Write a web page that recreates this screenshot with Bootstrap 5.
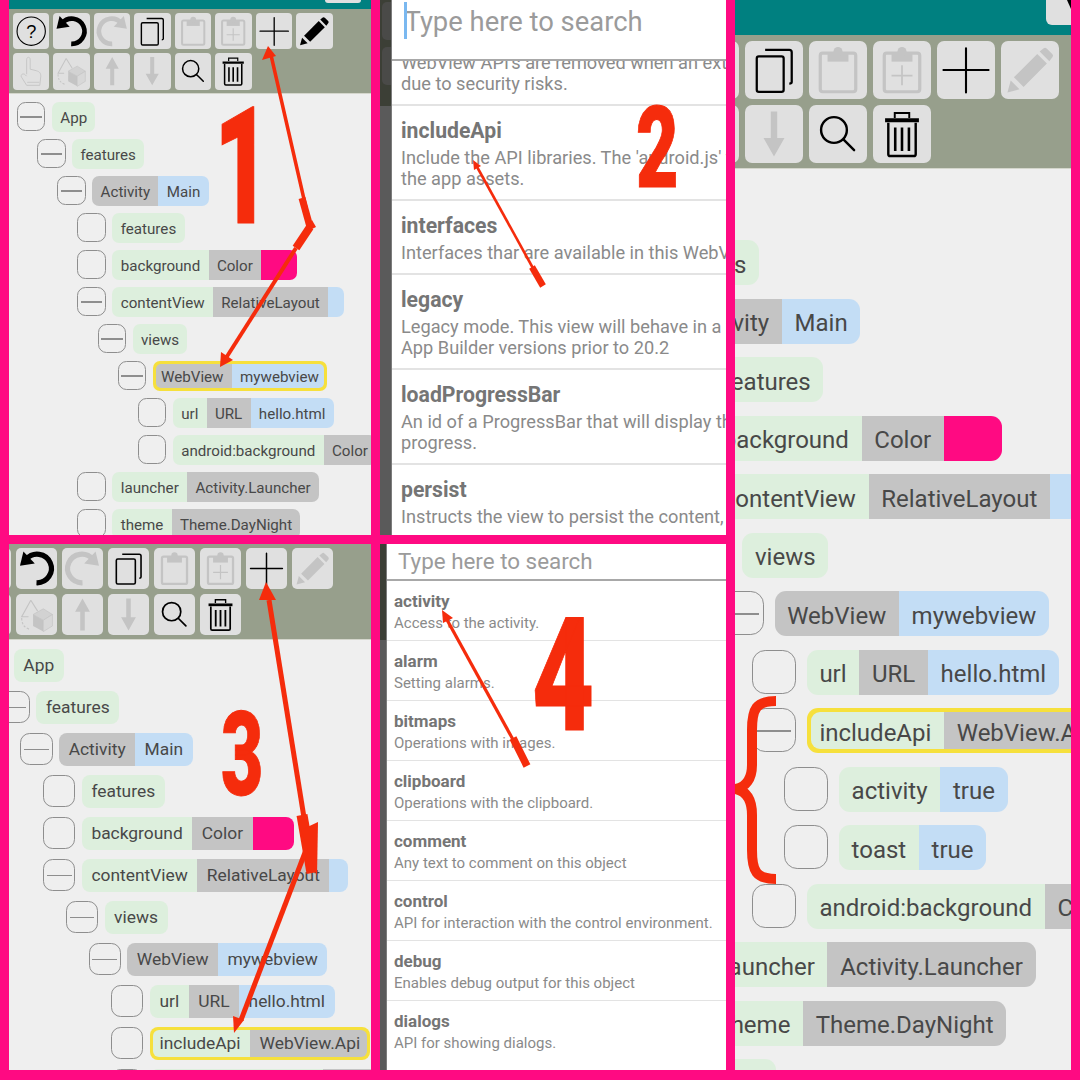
<!doctype html>
<html lang="en">
<head>
<meta charset="utf-8">
<title>App Builder WebView tutorial</title>
<link href="https://cdn.jsdelivr.net/npm/bootstrap@5.3.0/dist/css/bootstrap.min.css" rel="stylesheet">
<style>
html,body{margin:0;background:#ff0a82;}
body{width:1080px;height:1080px;overflow:hidden;position:relative;font-family:Roboto,"Liberation Sans",sans-serif;}
.collage{width:1080px;height:1080px;}
.colA{width:362px;margin-left:9px;flex:none;}
.colB{width:346px;margin-left:9px;flex:none;}
.colC{width:336px;margin-left:9px;flex:none;height:1070px;}
.shotTop{height:535px;flex:none;overflow:hidden;}
.shotBot{height:526px;flex:none;overflow:hidden;margin-top:9px;}
.screen{background:#efefef;}
/* toolbar */
.teal{background:#008080;flex:none;}
.teal1{height:9px;padding-right:10px;}
.teal1 .frag{width:36px;height:3px;border-radius:0 0 3px 3px;background:#e0e0e0;}
.teal5{height:35px;}
.teal5 .frag{width:25px;height:25px;border-radius:0 0 0 6px;background:#e0e0e0;color:#000;}
.teal5 .frag svg{display:block;width:25px;height:25px;}
.bar{background:#979f8c;border-bottom:1px solid #d4d6cc;flex:none;}
.tb{display:flex;align-items:center;justify-content:center;flex:none;padding:0;border:0;background:#e0e0e0;color:#000;width:var(--b);height:var(--b);border-radius:var(--r);}
.tb.off{color:#c4c4c4;}
.tb:hover,.tb:focus{background:#e0e0e0;color:#000;}
.tb svg{width:100%;height:100%;display:block;}
.bar1{--b:36.4px;--r:4px;padding:4px 0 3.4px 4px;}
.bar1 .tbrow{gap:4.1px;}
.bar1 .tbrow+.tbrow{margin-top:4px;}
.bar3{--b:41px;--r:5px;padding:4px 0 4px 0;margin-left:-39px;}
.bar3 .tbrow{gap:5px;}
.bar3 .tbrow+.tbrow{margin-top:5px;}
.bar5{--b:58px;--r:7px;padding:6px 0 5px 0;margin-left:-182px;width:calc(100% + 182px);}
.bar5 .tbrow{gap:6px;}
.bar5 .tbrow+.tbrow{margin-top:6px;}
/* tree */
.tree{color:#484848;white-space:nowrap;}
.tree1{--box:28.4px;--gap:6.6px;--ind:20.15px;--step:37px;--fs:15.15px;--pad:8.3px;--rad:7px;--blank:16px;--sw:36px;--bd:1.2px;--ring:3px;--dy:2.500px;margin-left:8px;padding-top:8px;}
.tree3{--box:32.2px;--gap:6.6px;--ind:22.7px;--step:42px;--fs:17.4px;--pad:9.5px;--rad:8px;--blank:18.5px;--sw:41px;--bd:1.3px;--ring:3px;--dy:0px;margin-left:-34px;padding-top:9px;}
.tree5{--box:44px;--gap:10.5px;--ind:32.2px;--step:58.5px;--fs:24px;--pad:12.7px;--rad:11px;--blank:30px;--sw:58px;--bd:1.6px;--ring:4px;--dy:4px;margin-left:-176px;padding-top:12.5px;}
.node{height:var(--step);padding-left:calc(var(--ind)*var(--d));gap:var(--gap);font-size:var(--fs);}
.lv0{--d:0}.lv1{--d:1}.lv2{--d:2}.lv3{--d:3}.lv4{--d:4}.lv5{--d:5}.lv6{--d:6}.lv7{--d:7}
.tog{width:var(--box);height:var(--box);flex:none;border:var(--bd) solid #8e8e8e;border-radius:30%;position:relative;}
.tog.open::before{content:"";position:absolute;left:9%;right:9%;top:50%;height:var(--bd);background:#8e8e8e;}
.chip{height:calc(var(--box) + 1px);flex:none;border-radius:var(--rad);overflow:hidden;line-height:1;}
.chip>span{display:flex;align-items:center;height:100%;padding:var(--dy) var(--pad) 0;}
.sG{background:#ddefdd;}
.sK{background:#c4c4c4;}
.sB{background:#c3ddf5;}
.sP{background:#ff0a82;width:var(--sw);padding:0!important;}
.sE{background:#c3ddf5;width:var(--blank);padding:0!important;}
.chip.picked{background:#f6e03c;padding:var(--ring);}
.chip.picked>span:first-child{border-radius:calc(var(--rad) - 2px) 0 0 calc(var(--rad) - 2px);padding-left:calc(var(--pad) - var(--ring));}
.chip.picked>span:last-child{border-radius:0 calc(var(--rad) - 2px) calc(var(--rad) - 2px) 0;padding-right:calc(var(--pad) - var(--ring));}
/* search sheets */
.dim{flex:none;background:#5a5a5a;border-right:1px solid #7c7c7c;}
.dimTop{background:#3c3f36;padding:2px 0 6px;}
.dimTop i{display:block;height:38px;border-radius:5px 0 0 5px;background:#4a4a48;margin:0 0 7px 2px;}
.dim2{width:12px;}.dim4{width:7px;}
.dim2 .dimTop{height:106px;}
.dim4 .dimTop{height:96px;}
.sheet{background:#fff;overflow:hidden;min-width:0;}
.find{flex:none;color:#9b9b9b;white-space:nowrap;border-bottom:2px solid #a8a8a8;background:#fff;position:relative;z-index:1;line-height:1;}
.find2{height:61px;font-size:27.4px;padding:9px 0 0 12.500px;}
.find4{height:37px;font-size:22.4px;padding:6px 0 0 11px;}
.caret{position:absolute;left:12px;top:2px;width:3px;height:37px;background:#7ab8f0;}
.hits{background:transparent;white-space:nowrap;}
.hit{border:0;border-radius:0!important;background:#fff;}
.hits2 .hit{padding:12px 9px 10px;border-bottom:2px solid #e3e3e3;}
.hits4 .hit{padding:10px 7px 0;height:60px;border-bottom:1px solid #e3e3e3;}
.hits2{margin-top:-21.500px;}
.hitT{color:#757575;font-weight:700;}
.hitD{color:#8a8a8a;}
.hits2 .hitT{font-size:21.2px;line-height:26px;margin-bottom:3px;}
.hits2 .hitD{font-size:18.2px;line-height:21px;}
.hits4 .hitT{font-size:17px;line-height:20px;margin-bottom:2px;}
.hits4 .hitD{font-size:15px;line-height:20px;}
/* annotations */
.marks{position:absolute;left:0;top:0;width:1080px;height:1080px;pointer-events:none;}
.marks text{font-family:Roboto,"Liberation Sans",sans-serif;font-weight:900;fill:#f52c0c;stroke:#f52c0c;stroke-width:1px;}
</style>
</head>
<body>
<svg width="0" height="0" class="position-absolute">
<defs>
<symbol id="i-help" viewBox="0 0 36 36"><circle cx="18" cy="18" r="14" fill="none" stroke="currentColor" stroke-width="1.1"/><text x="18" y="24.5" text-anchor="middle" font-family="Liberation Sans,sans-serif" font-size="18" fill="currentColor">?</text></symbol>
<symbol id="i-undo" viewBox="0 0 36 36"><path d="M18 30.500A12.500 12.500 0 1 0 9 10" fill="none" stroke="currentColor" stroke-width="4.600"/><path d="M3.500 15.500L6.500 3L16.500 13.500Z" fill="currentColor"/></symbol>
<symbol id="i-redo" viewBox="0 0 36 36"><path d="M18 30.500A12.500 12.500 0 1 1 27 10" fill="none" stroke="currentColor" stroke-width="4.600"/><path d="M32.500 15.500L29.500 3L19.500 13.500Z" fill="currentColor"/></symbol>
<symbol id="i-copy" viewBox="0 0 36 36"><rect x="7.300" y="9.600" width="16.700" height="22" rx="1.300" fill="none" stroke="currentColor" stroke-width="1.400"/><path d="M12.500 5.500H27.500Q29 5.500 29 7V25.500Q29 26.500 27.500 26.500" fill="none" stroke="currentColor" stroke-width="1.400"/></symbol>
<symbol id="i-paste" viewBox="0 0 36 36"><rect x="7" y="7.500" width="22" height="24" rx="1.500" fill="none" stroke="currentColor" stroke-width="2"/><rect x="11.500" y="7.500" width="13" height="5.300" fill="currentColor"/><circle cx="18" cy="6.500" r="2.800" fill="currentColor"/></symbol>
<symbol id="i-pasteadd" viewBox="0 0 36 36"><rect x="7" y="7.500" width="22" height="24" rx="1.500" fill="none" stroke="currentColor" stroke-width="2"/><rect x="11.500" y="7.500" width="13" height="5.300" fill="currentColor"/><circle cx="18" cy="6.500" r="2.800" fill="currentColor"/><path d="M18 15V27.500M11.500 21.500H24.500" fill="none" stroke="currentColor" stroke-width="1.100"/></symbol>
<symbol id="i-plus" viewBox="0 0 36 36"><path d="M18 4.500V32M4 18H32" fill="none" stroke="currentColor" stroke-width="1.300" stroke-linecap="round"/></symbol>
<symbol id="i-pencil" viewBox="0 0 36 36"><path d="M4 32L6 24.500L11.500 30Z" fill="currentColor"/><path d="M8 22.500L22.500 8L28.500 14L14 28.500Z" fill="currentColor"/><path d="M24 6.500L26.500 4.500Q27.500 3.800 28.500 4.800L31.800 8Q32.800 9 32 10L30 12.500Z" fill="currentColor"/></symbol>
<symbol id="i-hand" viewBox="0 0 36 36"><path d="M13.500 21V6.500C13.500 3.500 17 3.500 17 6.500V16L23 17.500C26.500 18.500 27.500 20 27.500 23L26.500 32H13.500L8.500 24C7 21.500 10 19.500 12 21.500L13.500 23" fill="none" stroke="currentColor" stroke-width=".9"/><path d="M14 29H26" fill="none" stroke="currentColor" stroke-width=".8"/></symbol>
<symbol id="i-cube" viewBox="0 0 36 36"><path d="M13 5.500L5 20H11M13 5.500L19 15" fill="none" stroke="currentColor" stroke-width="1"/><path d="M5 21Q5 29 12 31" fill="none" stroke="currentColor" stroke-width="1" stroke-dasharray="2 1.500"/><path d="M24 13L32 18L24 23L15 18Z" fill="#d2d2d2" stroke="currentColor" stroke-width=".6"/><path d="M15 18V28L24 33V23Z" fill="currentColor"/><path d="M24 23V33L32 28V18Z" fill="#d8d8d8" stroke="currentColor" stroke-width=".6"/></symbol>
<symbol id="i-up" viewBox="0 0 36 36"><path d="M18 4L24.500 15.500H20V32H16V15.500H11.500Z" fill="currentColor"/></symbol>
<symbol id="i-down" viewBox="0 0 36 36"><path d="M18 32L24.500 20.500H20V4H16V20.500H11.500Z" fill="currentColor"/></symbol>
<symbol id="i-find" viewBox="0 0 36 36"><circle cx="15.500" cy="15.500" r="8" fill="none" stroke="currentColor" stroke-width="1.500"/><path d="M21.500 21.500L28 28" fill="none" stroke="currentColor" stroke-width="1.500" stroke-linecap="round"/></symbol>
<symbol id="i-trash" viewBox="0 0 36 36"><path d="M7.500 9.500H28.500" stroke="currentColor" stroke-width="2.400"/><path d="M13.500 8V5H22.500V8" fill="none" stroke="currentColor" stroke-width="1.200"/><path d="M9.500 11V30.500Q9.500 31.700 10.700 31.700H25.300Q26.500 31.700 26.500 30.500V11" fill="none" stroke="currentColor" stroke-width="1.500"/><path d="M13.800 14V28.500M18 14V28.500M22.300 14V28.500" fill="none" stroke="currentColor" stroke-width="1.600"/></symbol>
</defs>
</svg>

<main class="collage d-flex">

<section class="colA d-flex flex-column">
  <!-- panel 1 -->
  <div class="shotTop screen d-flex flex-column">
    <div class="teal teal1 d-flex justify-content-end"><div class="frag"></div></div>
    <div class="bar bar1">
      <div class="tbrow d-flex">
        <button class="btn tb"><svg><use href="#i-help"/></svg></button>
        <button class="btn tb"><svg><use href="#i-undo"/></svg></button>
        <button class="btn tb off"><svg><use href="#i-redo"/></svg></button>
        <button class="btn tb"><svg><use href="#i-copy"/></svg></button>
        <button class="btn tb off"><svg><use href="#i-paste"/></svg></button>
        <button class="btn tb off"><svg><use href="#i-pasteadd"/></svg></button>
        <button class="btn tb"><svg><use href="#i-plus"/></svg></button>
        <button class="btn tb"><svg><use href="#i-pencil"/></svg></button>
      </div>
      <div class="tbrow d-flex">
        <button class="btn tb off"><svg><use href="#i-hand"/></svg></button>
        <button class="btn tb off"><svg><use href="#i-cube"/></svg></button>
        <button class="btn tb off"><svg><use href="#i-up"/></svg></button>
        <button class="btn tb off"><svg><use href="#i-down"/></svg></button>
        <button class="btn tb"><svg><use href="#i-find"/></svg></button>
        <button class="btn tb"><svg><use href="#i-trash"/></svg></button>
      </div>
    </div>
    <div class="tree tree1">
      <div class="node lv0 d-flex"><span class="tog open"></span><div class="chip d-inline-flex"><span class="sG">App</span></div></div>
      <div class="node lv1 d-flex"><span class="tog open"></span><div class="chip d-inline-flex"><span class="sG">features</span></div></div>
      <div class="node lv2 d-flex"><span class="tog open"></span><div class="chip d-inline-flex"><span class="sK">Activity</span><span class="sB">Main</span></div></div>
      <div class="node lv3 d-flex"><span class="tog"></span><div class="chip d-inline-flex"><span class="sG">features</span></div></div>
      <div class="node lv3 d-flex"><span class="tog"></span><div class="chip d-inline-flex"><span class="sG">background</span><span class="sK">Color</span><span class="sP"></span></div></div>
      <div class="node lv3 d-flex"><span class="tog open"></span><div class="chip d-inline-flex"><span class="sG">contentView</span><span class="sK">RelativeLayout</span><span class="sE"></span></div></div>
      <div class="node lv4 d-flex"><span class="tog open"></span><div class="chip d-inline-flex"><span class="sG">views</span></div></div>
      <div class="node lv5 d-flex"><span class="tog open"></span><div class="chip picked d-inline-flex"><span class="sK">WebView</span><span class="sB">mywebview</span></div></div>
      <div class="node lv6 d-flex"><span class="tog"></span><div class="chip d-inline-flex"><span class="sG">url</span><span class="sK">URL</span><span class="sB">hello.html</span></div></div>
      <div class="node lv6 d-flex"><span class="tog"></span><div class="chip d-inline-flex"><span class="sG">android:background</span><span class="sK">Color</span></div></div>
      <div class="node lv3 d-flex"><span class="tog"></span><div class="chip d-inline-flex"><span class="sG">launcher</span><span class="sK">Activity.Launcher</span></div></div>
      <div class="node lv3 d-flex"><span class="tog"></span><div class="chip d-inline-flex"><span class="sG">theme</span><span class="sK">Theme.DayNight</span></div></div>
    </div>
  </div>
  <!-- panel 3 -->
  <div class="shotBot screen d-flex flex-column">
    <div class="bar bar3">
      <div class="tbrow d-flex">
        <button class="btn tb"><svg><use href="#i-help"/></svg></button>
        <button class="btn tb"><svg><use href="#i-undo"/></svg></button>
        <button class="btn tb off"><svg><use href="#i-redo"/></svg></button>
        <button class="btn tb"><svg><use href="#i-copy"/></svg></button>
        <button class="btn tb off"><svg><use href="#i-paste"/></svg></button>
        <button class="btn tb off"><svg><use href="#i-pasteadd"/></svg></button>
        <button class="btn tb"><svg><use href="#i-plus"/></svg></button>
        <button class="btn tb off"><svg><use href="#i-pencil"/></svg></button>
      </div>
      <div class="tbrow d-flex">
        <button class="btn tb off"><svg><use href="#i-hand"/></svg></button>
        <button class="btn tb off"><svg><use href="#i-cube"/></svg></button>
        <button class="btn tb off"><svg><use href="#i-up"/></svg></button>
        <button class="btn tb off"><svg><use href="#i-down"/></svg></button>
        <button class="btn tb"><svg><use href="#i-find"/></svg></button>
        <button class="btn tb"><svg><use href="#i-trash"/></svg></button>
      </div>
    </div>
    <div class="tree tree3">
      <div class="node lv0 d-flex"><span class="tog open"></span><div class="chip d-inline-flex"><span class="sG">App</span></div></div>
      <div class="node lv1 d-flex"><span class="tog open"></span><div class="chip d-inline-flex"><span class="sG">features</span></div></div>
      <div class="node lv2 d-flex"><span class="tog open"></span><div class="chip d-inline-flex"><span class="sK">Activity</span><span class="sB">Main</span></div></div>
      <div class="node lv3 d-flex"><span class="tog"></span><div class="chip d-inline-flex"><span class="sG">features</span></div></div>
      <div class="node lv3 d-flex"><span class="tog"></span><div class="chip d-inline-flex"><span class="sG">background</span><span class="sK">Color</span><span class="sP"></span></div></div>
      <div class="node lv3 d-flex"><span class="tog open"></span><div class="chip d-inline-flex"><span class="sG">contentView</span><span class="sK">RelativeLayout</span><span class="sE"></span></div></div>
      <div class="node lv4 d-flex"><span class="tog open"></span><div class="chip d-inline-flex"><span class="sG">views</span></div></div>
      <div class="node lv5 d-flex"><span class="tog open"></span><div class="chip d-inline-flex"><span class="sK">WebView</span><span class="sB">mywebview</span></div></div>
      <div class="node lv6 d-flex"><span class="tog"></span><div class="chip d-inline-flex"><span class="sG">url</span><span class="sK">URL</span><span class="sB">hello.html</span></div></div>
      <div class="node lv6 d-flex"><span class="tog"></span><div class="chip picked d-inline-flex"><span class="sG">includeApi</span><span class="sK">WebView.Api</span></div></div>
      <div class="node lv6 d-flex"><span class="tog"></span><div class="chip d-inline-flex"><span class="sG">android:background</span><span class="sK">Color</span></div></div>
    </div>
  </div>
</section>

<section class="colB d-flex flex-column">
  <!-- panel 2 -->
  <div class="shotTop d-flex">
    <div class="dim dim2"><div class="dimTop"><i></i><i></i></div></div>
    <div class="sheet flex-grow-1 d-flex flex-column">
      <div class="find find2"><span class="caret"></span>Type here to search</div>
      <div class="list-group list-group-flush hits hits2">
        <div class="list-group-item hit"><div class="hitD">WebView API's are removed when an external URL is loaded<br>due to security risks.</div></div>
        <div class="list-group-item hit"><div class="hitT">includeApi</div><div class="hitD">Include the API libraries. The 'android.js' file is added to<br>the app assets.</div></div>
        <div class="list-group-item hit"><div class="hitT">interfaces</div><div class="hitD">Interfaces thar are available in this WebView</div></div>
        <div class="list-group-item hit"><div class="hitT">legacy</div><div class="hitD">Legacy mode. This view will behave in a way compatible with<br>App Builder versions prior to 20.2</div></div>
        <div class="list-group-item hit"><div class="hitT">loadProgressBar</div><div class="hitD">An id of a ProgressBar that will display the loading<br>progress.</div></div>
        <div class="list-group-item hit"><div class="hitT">persist</div><div class="hitD">Instructs the view to persist the content, even on rotation</div></div>
      </div>
    </div>
  </div>
  <!-- panel 4 -->
  <div class="shotBot d-flex">
    <div class="dim dim4"><div class="dimTop"></div></div>
    <div class="sheet flex-grow-1 d-flex flex-column">
      <div class="find find4">Type here to search</div>
      <div class="list-group list-group-flush hits hits4">
        <div class="list-group-item hit"><div class="hitT">activity</div><div class="hitD">Access to the activity.</div></div>
        <div class="list-group-item hit"><div class="hitT">alarm</div><div class="hitD">Setting alarms.</div></div>
        <div class="list-group-item hit"><div class="hitT">bitmaps</div><div class="hitD">Operations with images.</div></div>
        <div class="list-group-item hit"><div class="hitT">clipboard</div><div class="hitD">Operations with the clipboard.</div></div>
        <div class="list-group-item hit"><div class="hitT">comment</div><div class="hitD">Any text to comment on this object</div></div>
        <div class="list-group-item hit"><div class="hitT">control</div><div class="hitD">API for interaction with the control environment.</div></div>
        <div class="list-group-item hit"><div class="hitT">debug</div><div class="hitD">Enables debug output for this object</div></div>
        <div class="list-group-item hit"><div class="hitT">dialogs</div><div class="hitD">API for showing dialogs.</div></div>
      </div>
    </div>
  </div>
</section>

<section class="colC screen d-flex flex-column overflow-hidden">
  <!-- panel 5 -->
  <div class="teal teal5 d-flex justify-content-end"><div class="frag"><svg viewBox="0 0 25 25"><path d="M21 0H25V9Z" fill="currentColor"/></svg></div></div>
  <div class="bar bar5">
    <div class="tbrow d-flex">
      <button class="btn tb"><svg><use href="#i-help"/></svg></button>
      <button class="btn tb"><svg><use href="#i-undo"/></svg></button>
      <button class="btn tb off"><svg><use href="#i-redo"/></svg></button>
      <button class="btn tb"><svg><use href="#i-copy"/></svg></button>
      <button class="btn tb off"><svg><use href="#i-paste"/></svg></button>
      <button class="btn tb off"><svg><use href="#i-pasteadd"/></svg></button>
      <button class="btn tb"><svg><use href="#i-plus"/></svg></button>
      <button class="btn tb off"><svg><use href="#i-pencil"/></svg></button>
    </div>
    <div class="tbrow d-flex">
      <button class="btn tb off"><svg><use href="#i-hand"/></svg></button>
      <button class="btn tb off"><svg><use href="#i-cube"/></svg></button>
      <button class="btn tb off"><svg><use href="#i-up"/></svg></button>
      <button class="btn tb off"><svg><use href="#i-down"/></svg></button>
      <button class="btn tb"><svg><use href="#i-find"/></svg></button>
      <button class="btn tb"><svg><use href="#i-trash"/></svg></button>
    </div>
  </div>
  <div class="tree tree5">
    <div class="node lv0 d-flex"><span class="tog open"></span><div class="chip d-inline-flex"><span class="sG">App</span></div></div>
    <div class="node lv1 d-flex"><span class="tog open"></span><div class="chip d-inline-flex"><span class="sG">features</span></div></div>
    <div class="node lv2 d-flex"><span class="tog open"></span><div class="chip d-inline-flex"><span class="sK">Activity</span><span class="sB">Main</span></div></div>
    <div class="node lv3 d-flex"><span class="tog"></span><div class="chip d-inline-flex"><span class="sG">features</span></div></div>
    <div class="node lv3 d-flex"><span class="tog"></span><div class="chip d-inline-flex"><span class="sG">background</span><span class="sK">Color</span><span class="sP"></span></div></div>
    <div class="node lv3 d-flex"><span class="tog open"></span><div class="chip d-inline-flex"><span class="sG">contentView</span><span class="sK">RelativeLayout</span><span class="sE"></span></div></div>
    <div class="node lv4 d-flex"><span class="tog open"></span><div class="chip d-inline-flex"><span class="sG">views</span></div></div>
    <div class="node lv5 d-flex"><span class="tog open"></span><div class="chip d-inline-flex"><span class="sK">WebView</span><span class="sB">mywebview</span></div></div>
    <div class="node lv6 d-flex"><span class="tog"></span><div class="chip d-inline-flex"><span class="sG">url</span><span class="sK">URL</span><span class="sB">hello.html</span></div></div>
    <div class="node lv6 d-flex"><span class="tog open"></span><div class="chip picked d-inline-flex"><span class="sG">includeApi</span><span class="sK">WebView.Api</span></div></div>
    <div class="node lv7 d-flex"><span class="tog"></span><div class="chip d-inline-flex"><span class="sG">activity</span><span class="sB">true</span></div></div>
    <div class="node lv7 d-flex"><span class="tog"></span><div class="chip d-inline-flex"><span class="sG">toast</span><span class="sB">true</span></div></div>
    <div class="node lv6 d-flex"><span class="tog"></span><div class="chip d-inline-flex"><span class="sG">android:background</span><span class="sK">Color</span></div></div>
    <div class="node lv3 d-flex"><span class="tog"></span><div class="chip d-inline-flex"><span class="sG">launcher</span><span class="sK">Activity.Launcher</span></div></div>
    <div class="node lv3 d-flex"><span class="tog"></span><div class="chip d-inline-flex"><span class="sG">theme</span><span class="sK">Theme.DayNight</span></div></div>
    <div class="node lv3 d-flex"><span class="tog"></span><div class="chip d-inline-flex"><span class="sG">title</span></div></div>
  </div>
</section>
</main>

<!-- red annotations drawn over the collage -->
<svg class="marks" viewBox="0 0 1080 1080">
  <g fill="none" stroke="#f52c0c" stroke-linecap="butt">
    <!-- 1 -->
    <path d="M271 55L306 208" stroke-width="3.500"/>
    <path d="M302 198L310 227" stroke-width="7"/>
    <path d="M310 227L296 248" stroke-width="8"/>
    <path d="M296 248L226 358" stroke-width="4"/>
    <!-- 2 -->
    <path d="M476 165L534 270" stroke-width="2.600"/>
    <path d="M532 267L543 286" stroke-width="6.500"/>
    <!-- 3 -->
    <path d="M269 600L306 830" stroke-width="5"/>
    <path d="M302 815L312 873" stroke-width="11"/>
    <path d="M306 850L241 1020" stroke-width="5"/>
    <!-- 4 -->
    <path d="M446 618L516 745" stroke-width="3.200"/>
    <path d="M513 738L527 766" stroke-width="7.500"/>
    <!-- brace -->
    <path d="M776 701C756 701 752 709 752 730V765C752 780 745 787 736 789C745 791 752 798 752 815V850C752 871 756 879 776 879" stroke-width="10"/>
  </g>
  <g fill="#f52c0c">
    <path d="M268 46L262 60L276 56Z"/>
    <path d="M312 220L316 227L308 231Z"/>
    <path d="M220 367L221 352L233 360Z"/>
    <path d="M473 160L474 170L481 166Z"/>
    <path d="M266 582L259 600L276 600Z"/>
    <path d="M234 1033L233 1016L244 1020Z"/>
    <path d="M442 610L443 623L453 618Z"/>
    <path d="M301 830L318 822L317 876Z"/>
  </g>
  <text transform="translate(214 223) scale(.6 1)" font-size="163">1</text>
  <text transform="translate(636 187) scale(.65 1)" font-size="113">2</text>
  <text transform="translate(221 795) scale(.63 1)" font-size="116">3</text>
  <text transform="translate(532 730) scale(.68 1)" font-size="158">4</text>
</svg>
<script src="https://cdn.jsdelivr.net/npm/bootstrap@5.3.0/dist/js/bootstrap.bundle.min.js"></script>
</body>
</html>
